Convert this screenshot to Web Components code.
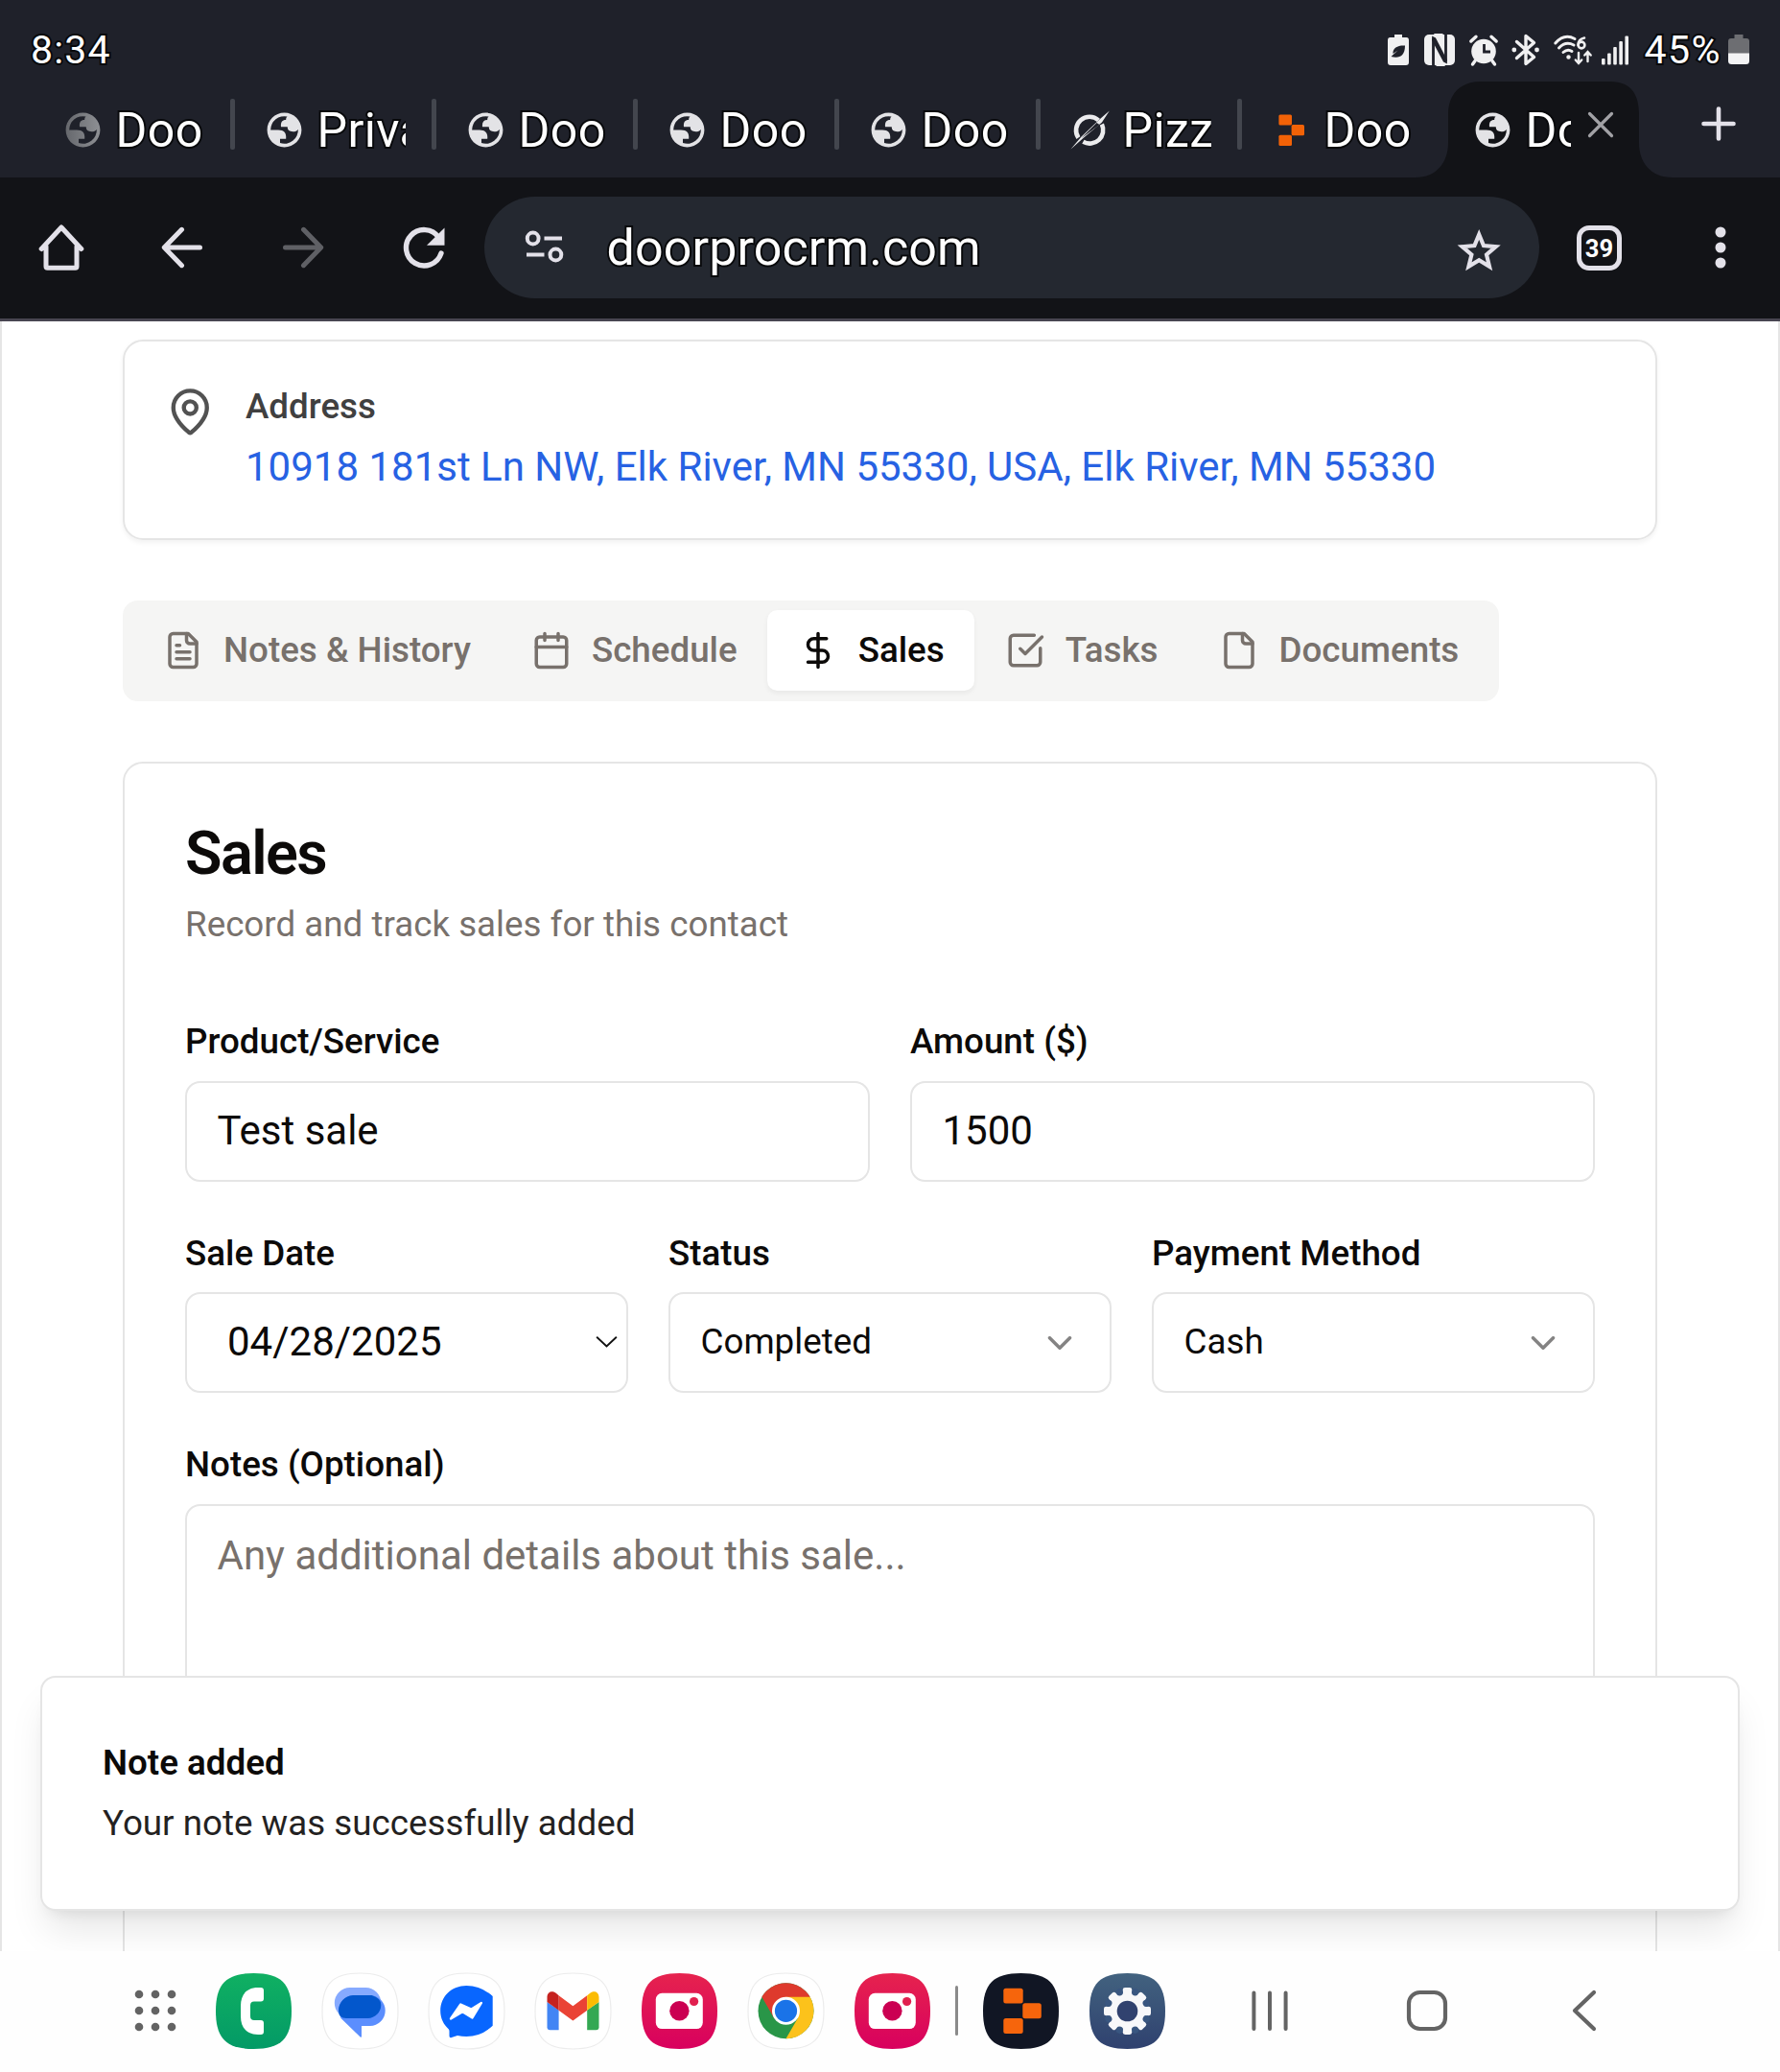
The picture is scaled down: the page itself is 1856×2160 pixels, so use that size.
<!DOCTYPE html>
<html lang="en">
<head>
<meta charset="utf-8">
<title>DoorPro CRM</title>
<style>
html{font-size:42px}
body{margin:0;font-family:Roboto,sans-serif;background:#fff;width:1856px;height:2160px;overflow:hidden}
</style>
</head>
<body>
<phone-screen></phone-screen>
<script>
const SQ='M39.5 0C68 0 79 11 79 39.5S68 79 39.5 79 0 68 0 39.5 11 0 39.5 0Z';
const plain=`<path d="${SQ}" fill="#fff" stroke="#ececec" stroke-width="1.2"/>`;
const lucide=s=>[24,24,`<g fill="none" stroke="currentColor" stroke-width="2" stroke-linecap="round" stroke-linejoin="round">${s}</g>`];
const grad=(id,a,b)=>`<linearGradient id="${id}" x1="0" y1="0" x2="0" y2="1"><stop offset="0" stop-color="${a}"/><stop offset="1" stop-color="${b}"/></linearGradient>`;
const camera=[79,79,`${grad('g','#e6234e','#d8005e')}<path d="${SQ}" fill="url(#g)"/><rect x="14.8" y="20.8" width="49" height="37.3" rx="6.5" fill="#fff"/><circle cx="39.4" cy="39.2" r="10.2" fill="#cb0052"/><circle cx="54.6" cy="29.5" r="4.6" fill="#e1204f"/>`];
let teeth='';
for(let i=0;i<8;i++)teeth+=`<rect x="34.7" y="15" width="9.6" height="12" rx="2.4" transform="rotate(${i*45} 39.5 39.5)"/>`;
let gaps='';
for(let i=0;i<8;i++)gaps+=`<circle cx="39.5" cy="18.2" r="3.6" fill="#395680" transform="rotate(${i*45+22.5} 39.5 39.5)"/>`;
const ICONS={
 mappin:lucide('<path d="M20 10c0 4.993-5.539 10.193-7.399 11.799a1 1 0 0 1-1.202 0C9.539 20.193 4 14.993 4 10a8 8 0 0 1 16 0"/><circle cx="12" cy="10" r="3"/>'),
 filetext:lucide('<path d="M15 2H6a2 2 0 0 0-2 2v16a2 2 0 0 0 2 2h12a2 2 0 0 0 2-2V7Z"/><path d="M14 2v4a2 2 0 0 0 2 2h4M10 9H8M16 13H8M16 17H8"/>'),
 file:lucide('<path d="M15 2H6a2 2 0 0 0-2 2v16a2 2 0 0 0 2 2h12a2 2 0 0 0 2-2V7Z"/><path d="M14 2v4a2 2 0 0 0 2 2h4"/>'),
 calendar:lucide('<path d="M8 2v4M16 2v4"/><rect width="18" height="18" x="3" y="4" rx="2"/><path d="M3 10h18"/>'),
 dollar:lucide('<path d="M12 2v20M17 5H9.5a3.5 3.5 0 0 0 0 7h5a3.5 3.5 0 0 1 0 7H6"/>'),
 check:lucide('<path d="M21 10.656V19a2 2 0 0 1-2 2H5a2 2 0 0 1-2-2V5a2 2 0 0 1 2-2h12.344"/><path d="m9 11 3 3L22 4"/>'),
 chevron:lucide('<path d="m6 9 6 6 6-6"/>'),
 thinchevron:[24,12,'<path d="M1.2 .8 12 10.8 22.8 .8" fill="none" stroke="#111" stroke-width="2"/>'],
 globe:[24,24,'<path fill="#e3e3e6" fill-rule="evenodd" d="M12 2C6.48 2 2 6.48 2 12s4.48 10 10 10 10-4.48 10-10S17.52 2 12 2zM4 12h4.4c3.407.022 4.922 1.73 4.543 5.127H9.488v2.47a8.004 8.004 0 0 0 10.498-8.08C19.327 12.506 18.332 13 17 13c-2.137 0-3.206-.916-3.206-2.75h-3.748c-.274-2.728.683-4.092 2.87-4.092 0-.975.327-1.597.811-1.97A8.004 8.004 0 0 0 4 12z"/>'],
 globefade:[24,24,'<linearGradient id="g"><stop offset="0" stop-color="#66686d"/><stop offset="1" stop-color="#8e9094"/></linearGradient><path fill="url(#g)" fill-rule="evenodd" d="M12 2C6.48 2 2 6.48 2 12s4.48 10 10 10 10-4.48 10-10S17.52 2 12 2zM4 12h4.4c3.407.022 4.922 1.73 4.543 5.127H9.488v2.47a8.004 8.004 0 0 0 10.498-8.08C19.327 12.506 18.332 13 17 13c-2.137 0-3.206-.916-3.206-2.75h-3.748c-.274-2.728.683-4.092 2.87-4.092 0-.975.327-1.597.811-1.97A8.004 8.004 0 0 0 4 12z"/>'],
 slash:[43,43,'<g fill="none" stroke="#ececee" stroke-width="4.6"><path d="M9.400 29.600A14 14 0 0 1 30.400 11.400"/><path d="M33.900 15.600A14 14 0 0 1 14.400 33.800"/></g><path d="M1.500 41.500 12.500 28.500 32 10 41.800 1.500 34 13.500 15 29.500Z" fill="#ececee"/><path d="M12.500 30 28.500 14 31.500 16Z" fill="#1f212a"/>'],
 prompt:[43,43,'<g fill="#f26207"><rect x="8.4" y="5.5" width="13.6" height="11" rx="1.5"/><rect x="21.6" y="16" width="13.4" height="11.2" rx="1.5"/><rect x="8.4" y="26.8" width="13.6" height="11.2" rx="1.5"/></g>'],
 close:[28,28,'<path d="M2.5 2.5 25.5 25.5M25.5 2.5 2.5 25.5" stroke="#a2a2a6" stroke-width="3.2" stroke-linecap="round"/>'],
 plus:[36,36,'<path d="M18 2.5v31M2.5 18h31" stroke="#e3e1e9" stroke-width="4.6" stroke-linecap="round"/>'],
 home:[60,60,'<path d="M9.2 31.5 30 9 50.8 31.5M14 29V49.8q0 1.5 1.5 1.5H44.500q1.500 0 1.500-1.500V29" fill="none" stroke="#e3e1e9" stroke-width="5" stroke-linecap="round" stroke-linejoin="round"/>'],
 back:[60,60,'<path d="M48.500 30H11.500M29.500 11.300 11.300 30 29.500 48.700" fill="none" stroke="#e3e1e9" stroke-width="5" stroke-linecap="round" stroke-linejoin="round"/>'],
 forward:[60,60,'<path d="M11.500 30H48.500M30.500 11.300 48.700 30 30.500 48.700" fill="none" stroke="#5f6065" stroke-width="5" stroke-linecap="round" stroke-linejoin="round"/>'],
 reload:[60,60,'<path d="M45.500 19.500A18.700 18.700 0 1 0 48 36" fill="none" stroke="#e3e1e9" stroke-width="5.400" stroke-linecap="round"/><path d="M51.500 9.500V27.700H33Z" fill="#e3e1e9"/>'],
 tune:[60,60,'<g fill="none" stroke="#e3e1e9" stroke-width="4"><circle cx="17.700" cy="20.500" r="5.900"/><circle cx="41.400" cy="37.500" r="5.900"/><path d="M29.500 20.500H48M11 37.500H29.500"/></g>'],
 star:[60,60,'<path d="M30 14.500 34.600 25.700 46.800 26.700 37.500 34.700 40.400 46.600 30 40.200 19.600 46.600 22.500 34.700 13.200 26.700 25.400 25.700Z" fill="none" stroke="#e3e1e9" stroke-width="4" transform="translate(-1 -.6) scale(1.04)"/>'],
 dots:[60,60,'<g fill="#e3e1e9"><circle cx="30" cy="14" r="5.500"/><circle cx="30" cy="30" r="5.500"/><circle cx="30" cy="46" r="5.500"/></g>'],
 eco:[22,32,'<path d="M7 0h8v3h4.500Q22 3 22 6V29q0 3-3 3H3q-3 0-3-3V6Q0 3 2.500 3H7Z" fill="#f0f0f1"/><path d="M18 11.500c-7-.500-13 2-12.500 8.500l5-3.500L3.500 23c8 2 14.500 0 14.500-11.500Z" fill="#1f212a"/>'],
 nfc:[32,32,'<rect width="32" height="32" rx="5" fill="#f0f0f1"/><path d="M9.500 33V4M22.500 -1V28" stroke="#1f212a" stroke-width="2.800"/><path d="M8.100 1.500 12 3.500 23.900 26.500V30.500L20 28.500 8.100 6Z" fill="#1f212a"/><path d="M12.500 33V17L19 28.500 22 33ZM19.500 -1V15L13 3.500 10 -1Z" fill="#f0f0f1"/><path d="M12.500 32H20L12.500 19ZM19.500 0H12L19.500 13Z" fill="#f0f0f1"/>'],
 alarm:[30,32,'<circle cx="15" cy="17.500" r="12.800" fill="#f0f0f1"/><path d="M1.800 7 7 2.200M28.200 7 23 2.200M6 27.500 3.500 31M24 27.500 26.500 31" stroke="#f0f0f1" stroke-width="3.400" stroke-linecap="round"/><path d="M15.500 10V18H22" fill="none" stroke="#1f212a" stroke-width="2.800"/>'],
 bt:[30,32,'<path d="M5.500 7.500 23.500 23.500 15 30.500V1.500L23.500 8.500 5.500 24.500" fill="none" stroke="#f0f0f1" stroke-width="3.400" stroke-linejoin="round" stroke-linecap="round"/><circle cx="2.800" cy="16" r="2.400" fill="#f0f0f1"/><circle cx="26.500" cy="16" r="2.400" fill="#f0f0f1"/>'],
 wifi:[40,32,'<g fill="none" stroke="#f0f0f1" stroke-width="3" stroke-linecap="round"><path d="M1.800 9Q11-1.500 22 4.500"/><path d="M5.500 14Q12.500 6.500 21 11"/><path d="M10 18.500Q14.500 14.500 19 17.500"/><path d="M32 3.500Q25.500 5 25.500 11" stroke-width="2.600"/><circle cx="29" cy="11" r="3.400" stroke-width="2.600"/><path d="M26 19V29.500M22.800 26.500 26 30 29.200 26.500M35.500 28V18.500M32.300 21.500 35.500 18 38.700 21.500" stroke-width="2.400"/></g><circle cx="15.500" cy="23.500" r="2.200" fill="#f0f0f1"/>'],
 signal:[28,32,'<g fill="#f0f0f1"><rect x="0" y="25" width="3.600" height="6.500" rx="1"/><rect x="6.100" y="19.500" width="3.600" height="12" rx="1"/><rect x="12.200" y="13" width="3.600" height="18.500" rx="1"/><rect x="18.300" y="7" width="3.600" height="24.500" rx="1"/><rect x="24.400" y="1.500" width="3.600" height="30" rx="1"/></g>'],
 battery:[22,31,'<path d="M6.500 0h9v4H19q3 0 3 3V20H0V7Q0 4 3 4H6.500Z" fill="#6d6e72"/><path d="M0 19.500H22V27.500q0 3.500-3.500 3.500H3.500Q0 31 0 27.500Z" fill="#f3f3f4"/>'],
 grid:[44,44,'<g fill="#636363">'+[5,22,39].map(y=>[5,22,39].map(x=>`<circle cx="${x}" cy="${y}" r="4.300"/>`).join('')).join('')+'</g>'],
 phone:[79,79,`${grad('g','#10b062','#039a66')}<path d="${SQ}" fill="url(#g)"/><path d="M47 15h-3C32 15 26 22.500 26 34v11c0 11.500 6 19 18 19h3q3 0 3-3v-9q0-3-3-3h-7q-4 0-4-4V33.500q0-4 4-4h7q3 0 3-3V18q0-3-3-3Z" fill="#fff"/>`],
 messages:[79,79,`${plain}<rect x="12.800" y="15" width="48.500" height="32" rx="16" fill="#86aaff"/><path d="M33 23H49.700a16 16 0 0 1 0 32H41V65.700q0 2-1.600 .500L19.500 47 17 39A16 16 0 0 1 33 23Z" fill="#5b8efe"/><path d="M32 23H51.500Q61.300 26 61.300 33A14 14 0 0 1 47.500 47H25Q17 47 17 39A16 16 0 0 1 32 23Z" fill="#0357cc"/>`],
 messenger:[79,79,`${plain}<path d="M39.300 13C24 13 12.200 24.200 12.200 39.300 12.200 47 15.500 53.500 20.700 58.300q.8.800.8 2.200V65.500q.1 2.400 2.400 1.600L30 65Q34.500 66 39.300 66 54.600 66 66.700 54.800 66.700 39.300 66.700 24 54.600 13 39.300 13Z" fill="#0866ff"/><path d="M23 47.500 33.300 32.500 44.500 37.500 54.900 31 45.500 46.500 35.300 40.300Z" fill="#fff" stroke="#fff" stroke-width="2.400" stroke-linejoin="round"/>`],
 gmail:[79,79,`${plain}<path d="M12.500 30 24.600 38.500V59.300H15.500q-3 0-3-3Z" fill="#4285f4"/><path d="M66.500 30 54.200 38.500V59.300h9.300q3 0 3-3Z" fill="#34a853"/><path d="M24.600 23.300 39.400 34.300 54.200 23.300V38.800L39.400 49.600 24.600 38.800Z" fill="#ea4335"/><path d="M24.600 23.300V38.800L12.500 30V25C12.500 19 18.500 17.500 22 21Z" fill="#c5221f"/><path d="M54.200 23.300V38.800L66.500 30V25C66.500 19 60.500 17.500 57 21Z" fill="#fbbc04"/>`],
 camera,
 chrome:[79,79,`${plain}<g transform="translate(.5 .3)"><circle cx="39" cy="39" r="29" fill="#299648"/><path d="M13.900 24.500A29 29 0 0 1 64.100 24.500L39 39 26.400 46.250Z" fill="#de3a2d"/><path d="M64.100 24.500A29 29 0 0 1 39 68L51.600 46.250 39 39V24.500Z" fill="#fcc21b"/><circle cx="39" cy="39" r="14.500" fill="#fff"/><circle cx="39" cy="39" r="11.600" fill="#1a73e8"/></g>`],
 replit:[79,79,`<path d="${SQ}" fill="#111624"/><g fill="#f6650c"><rect x="21.300" y="15.800" width="20.400" height="15.700" rx="2.500"/><rect x="41.300" y="31.200" width="19.500" height="16" rx="2.500"/><rect x="21.300" y="47" width="20.400" height="15.900" rx="2.500"/></g>`],
 settings:[79,79,`${grad('g','#42627f','#2f416f')}<path d="${SQ}" fill="url(#g)"/><g fill="#f8f8fa">${teeth}<circle cx="39.500" cy="39.500" r="21"/></g>${gaps}<circle cx="39.500" cy="39.500" r="10.800" fill="#31426f"/>`],
 recents:[44,44,'<path d="M5.400 3.500V41M22 3.500V41M38.600 3.500V41" stroke="#646464" stroke-width="4" stroke-linecap="round"/>'],
 navhome:[44,44,'<rect x="3" y="3" width="38" height="38" rx="11.500" fill="none" stroke="#646464" stroke-width="4.200"/>'],
 navback:[44,44,'<path d="M32 3 12 22 32 41" fill="none" stroke="#646464" stroke-width="4.200" stroke-linecap="round" stroke-linejoin="round"/>']
};
function define(name,render){
  customElements.define(name,class extends HTMLElement{
    constructor(){super();this.attachShadow({mode:'open'})}
    connectedCallback(){this.shadowRoot.innerHTML=render(this)}
  });
}
const outline='color:#fff;-webkit-text-stroke:4px #08090b;paint-order:stroke fill;';
define('ui-icon',e=>{
  const [w,h,s]=ICONS[e.getAttribute('name')];
  const width=+(e.getAttribute('size')||w);
  return `<style>:host{display:block;flex:none}svg{display:block;overflow:visible}</style><svg width="${width}" height="${width*h/w}" viewBox="0 0 ${w} ${h}">${s}</svg>`;
});
define('status-bar',()=>`<style>
:host{display:flex;height:85px;box-sizing:border-box;padding:18px 32px 0 32px;align-items:center;font-size:41px;line-height:48px}
span{${outline}}
.t{flex:1;letter-spacing:1.200px}.i{display:flex;align-items:center}
.p{margin:0 7px 0 16px;letter-spacing:1.500px}
</style><span class="t">8:34</span><div class="i">
<ui-icon name="eco"></ui-icon><ui-icon name="nfc" style="margin-left:16px"></ui-icon><ui-icon name="alarm" style="margin-left:15px"></ui-icon><ui-icon name="bt" style="margin-left:14px"></ui-icon><ui-icon name="wifi" style="margin-left:14px"></ui-icon><ui-icon name="signal" style="margin-left:10px"></ui-icon><span class="p">45%</span><ui-icon name="battery"></ui-icon></div>`);
define('browser-tab',e=>{
  const active=e.hasAttribute('active'),last=e.hasAttribute('last');
  return `<style>
:host{display:flex;position:relative;width:210px;height:100px;box-sizing:border-box;padding-left:30.500px;align-items:center;flex:none}
.t{${outline}font-size:50px;letter-spacing:.400px;line-height:64px;width:${active?47:95}px;overflow:hidden;white-space:nowrap;padding-left:3px;margin:2px 0 0 9.500px}
.sep{margin-left:27px;width:5px;height:53px;border-radius:2px;background:#43464e;flex:none;transform:translateY(-6px)}
.shape{position:absolute;left:-29px;top:0}
ui-icon,.t{position:relative}
.x{margin:-11px 0 0 17px}
</style>${active?'<svg class="shape" width="268" height="100"><path d="M0 100C22 100 34 84 34 64V34C34 14 46 0 68 0H203C225 0 233 14 233 34V64C233 84 245 100 268 100Z" fill="#121317"/></svg>':''}
<ui-icon name="${e.getAttribute('icon')}" size="43"></ui-icon><div class="t"><slot></slot></div>${active?'<ui-icon class="x" name="close"></ui-icon>':last?'':'<div class="sep"></div>'}`;
});
define('tab-strip',()=>`<style>:host{display:flex;height:100px;padding-left:34.500px;align-items:center}.p{margin:-12px 0 0 59.500px}</style>
<browser-tab icon="globefade">Doo</browser-tab><browser-tab icon="globe">Priva</browser-tab><browser-tab icon="globe">Doo</browser-tab><browser-tab icon="globe">Doo</browser-tab><browser-tab icon="globe">Doo</browser-tab><browser-tab icon="slash">Pizza</browser-tab><browser-tab icon="prompt" last>Doo</browser-tab><browser-tab icon="globe" active>Doo</browser-tab><ui-icon class="p" name="plus"></ui-icon>`);
define('browser-toolbar',()=>`<style>
:host{display:flex;height:147px;box-sizing:content-box;background:#121317;border-bottom:3px solid #484551;align-items:flex-start}
.b{width:126px;height:106px;display:flex;justify-content:center;align-items:center;flex:none}
:host>.b,.o{margin-top:20px}
:host{padding-left:.500px}
.o{width:1100px;height:106px;border-radius:53px;background:#242830;display:flex;align-items:center;flex:none}
.u{flex:1;font-size:52px;letter-spacing:.100px;${outline}line-height:60px;padding:2px 0 0 2px}
.w{margin-top:21px}
.n{box-sizing:border-box;width:47px;height:47px;border:5.500px solid #e3e1e9;border-radius:13px;font-size:25.500px;font-weight:700;line-height:39px;text-align:center;color:#fff}
</style><div class="b"><ui-icon name="home"></ui-icon></div><div class="b"><ui-icon name="back"></ui-icon></div><div class="b"><ui-icon name="forward"></ui-icon></div><div class="b"><ui-icon name="reload"></ui-icon></div>
<div class="o"><div class="b"><ui-icon name="tune"></ui-icon></div><div class="u">doorprocrm.com</div><div class="b"><ui-icon name="star" style="margin-top:3px"></ui-icon></div></div>
<div class="b"><div class="n">39</div></div><div class="b"><ui-icon name="dots"></ui-icon></div>`);
define('address-card',()=>`<style>
:host{display:flex;gap:.75rem;box-sizing:border-box;border:2px solid #e5e5e5;border-radius:.5rem;padding:1rem;box-shadow:0 2.600px 5.250px rgba(0,0,0,.05);height:208.750px}
ui-icon{color:#525252;margin-top:4.500px}
.l{font-size:.875rem;line-height:1.250rem;font-weight:500;color:#404040}
.a{line-height:1.500rem;color:#2762e3;margin-top:4px}
</style><ui-icon name="mappin" size="52.500"></ui-icon><div><div class="l">Address</div><div class="a">10918 181st Ln NW, Elk River, MN 55330, USA, Elk River, MN 55330</div></div>`);
define('nav-tab',e=>`<style>
:host{display:flex;align-items:center;gap:.5rem;height:84px;padding:0 .75rem;border-radius:10.500px;font-size:.875rem;font-weight:500;color:#78716c;white-space:nowrap}
:host([active]){background:#fff;color:#0c0a09;box-shadow:0 2.600px 5.250px rgba(0,0,0,.05)}
</style><ui-icon name="${e.getAttribute('icon')}" size="42"></ui-icon><slot></slot>`);
define('nav-tabs',()=>`<style>:host{display:flex;align-self:flex-start;background:#f5f5f4;border-radius:15.750px;padding:9.500px 10.500px 11.500px}</style>
<nav-tab icon="filetext">Notes &amp; History</nav-tab><nav-tab icon="calendar">Schedule</nav-tab><nav-tab icon="dollar" active>Sales</nav-tab><nav-tab icon="check">Tasks</nav-tab><nav-tab icon="file">Documents</nav-tab>`);
define('form-field',e=>{
  const k=e.getAttribute('kind')||'text';
  return `<style>
:host{display:block;flex:1}
.l{font-size:.875rem;line-height:63px;font-weight:500;margin-bottom:9.500px}
.c{display:flex;align-items:center;justify-content:space-between;box-sizing:border-box;height:105px;margin-bottom:1px;border:2px solid #e5e5e5;border-radius:15.750px;padding:0 31.500px 2px;line-height:1.500rem}
.c.date{padding:0 9px 2px 42px}
.c.select{font-size:.875rem;padding-bottom:2px}
.c.select ui-icon{opacity:.5;margin-top:2px}
.c.area{height:300px;align-items:flex-start;color:#78716c;padding-top:20px}
</style><div class="l">${e.getAttribute('label')}</div><div class="c ${k}"><slot></slot>${k==='select'?'<ui-icon name="chevron" size="42"></ui-icon>':k==='date'?'<ui-icon name="thinchevron" size="23"></ui-icon>':''}</div>`;
});
define('sales-card',()=>`<style>
:host{display:block;box-sizing:border-box;border:2px solid #e5e5e5;border-radius:.5rem;padding:62px 63px;height:1400px;color:#0c0a09}
h1{margin:0;font-size:1.500rem;line-height:1;font-weight:600;letter-spacing:-.025em}
p{margin:16.750px 0 64px;font-size:.875rem;line-height:1.250rem;color:#78716c}
.f{display:flex;flex-direction:column;gap:1rem}.r{display:flex;gap:1rem}
</style><h1>Sales</h1><p>Record and track sales for this contact</p><div class="f">
<div class="r"><form-field label="Product/Service">Test sale</form-field><form-field label="Amount ($)">1500</form-field></div>
<div class="r"><form-field label="Sale Date" kind="date">04/28/2025</form-field><form-field label="Status" kind="select">Completed</form-field><form-field label="Payment Method" kind="select">Cash</form-field></div>
<form-field label="Notes (Optional)" kind="area">Any additional details about this sale...</form-field></div>`);
define('toast-message',()=>`<style>
:host{display:block;position:absolute;left:42px;top:1412px;width:1772px;height:245px;box-sizing:border-box;padding:63px;background:#fff;border:2px solid #e5e5e5;border-radius:15.750px;box-shadow:0 26.250px 39.400px -7.900px rgba(0,0,0,.1),0 10.500px 15.750px -10.500px rgba(0,0,0,.1);font-size:.875rem;line-height:1.250rem;color:#0c0a09}
b{display:block;font-weight:600;margin-bottom:10.500px}div{opacity:.9}
</style><b>Note added</b><div>Your note was successfully added</div>`);
define('page-view',()=>`<style>
:host{display:flex;flex-direction:column;gap:63px;position:relative;height:1699px;box-sizing:border-box;overflow:hidden;border:solid #e5e5e5;border-width:0 2px;padding:19.250px 126px 0}
toast-message{margin-left:-2px}address-card,sales-card{flex:none}
</style><address-card></address-card><nav-tabs></nav-tabs><sales-card></sales-card><toast-message></toast-message>`);
define('app-dock',()=>`<style>
:host{display:flex;height:126px;box-sizing:border-box;padding-bottom:2px;background:#fefefe;align-items:center;padding-left:106px}
div{display:flex;justify-content:center;width:111px;flex:none}
.g{width:103px;padding-right:8px;box-sizing:border-box;margin-left:8px;margin-right:-8px}
.s{width:3px;height:52px;border-radius:2px;background:#8a8a8a;margin:0 10px}
.n{width:164px}.n1{margin-left:11px}
</style><div class="g"><ui-icon name="grid"></ui-icon></div>${['phone','messages','messenger','gmail','camera','chrome','camera'].map(n=>`<div><ui-icon name="${n}"></ui-icon></div>`).join('')}<div class="s"></div><div><ui-icon name="replit"></ui-icon></div><div><ui-icon name="settings"></ui-icon></div>
<div class="n n1"><ui-icon name="recents"></ui-icon></div><div class="n"><ui-icon name="navhome"></ui-icon></div><div class="n"><ui-icon name="navback"></ui-icon></div>`);
define('phone-screen',()=>`<style>:host{display:flex;flex-direction:column;width:1856px;height:2160px;overflow:hidden}header{background:#1f212a;height:335px;flex:none}</style>
<header><status-bar></status-bar><tab-strip></tab-strip><browser-toolbar></browser-toolbar></header><page-view></page-view><app-dock></app-dock>`);
</script>
</body>
</html>
